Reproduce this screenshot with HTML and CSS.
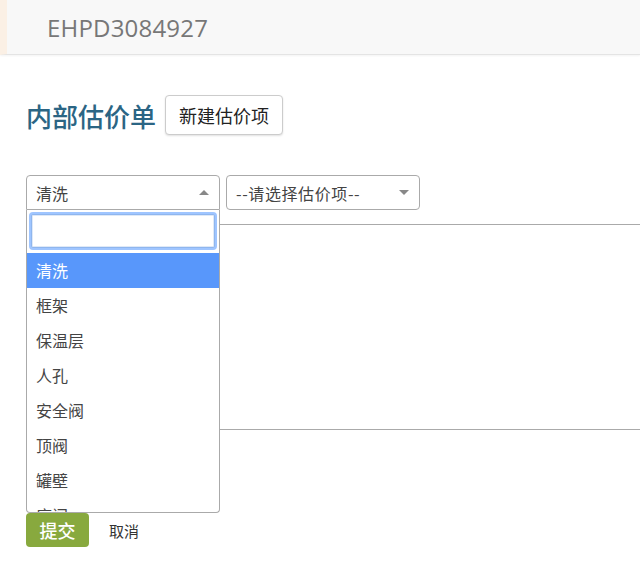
FILE: index.html
```html
<!DOCTYPE html>
<html lang="zh">
<head>
<meta charset="utf-8">
<title>内部估价单</title>
<link rel="stylesheet" href="styles.css">
</head>
<body>
<header class="topbar"><span class="code">EHPD3084927</span></header>
<main class="main">
  <div class="heading-row">
    <h1 class="heading">内部估价单</h1>
    <button class="btn-new">新建估价项</button>
  </div>
  <div class="select-row">
    <div class="select open">
      <span>清洗</span>
      <span class="arrow up"></span>
    </div>
    <div class="select">
      <span class="placeholder">--请选择估价项--</span>
      <span class="arrow down"></span>
    </div>
    <div class="dropdown">
      <div class="search"><input class="search-input" type="text"></div>
      <ul class="options">
        <li class="option selected">清洗</li>
        <li class="option">框架</li>
        <li class="option">保温层</li>
        <li class="option">人孔</li>
        <li class="option">安全阀</li>
        <li class="option">顶阀</li>
        <li class="option">罐壁</li>
        <li class="option">底阀</li>
      </ul>
    </div>
  </div>
  <div class="panel"></div>
  <div class="actions">
    <button class="btn-submit">提交</button>
    <span class="cancel">取消</span>
  </div>
</main>
</body>
</html>
```

FILE: styles.css
```css
html, body {
  margin: 0;
  padding: 0;
  background: #fff;
  font-family: "Open Sans", "Noto Sans CJK SC", sans-serif;
}

.topbar {
  box-sizing: border-box;
  height: 55px;
  background: #f8f8f8;
  border-left: 7px solid #fbf0e5;
  border-bottom: 1px solid #e4e4e4;
  box-shadow: 0 1px 2px rgba(0, 0, 0, 0.05);
  display: flex;
  align-items: center;
  padding-left: 40px;
}

.code {
  font-size: 24px;
  color: #777;
  letter-spacing: 0.2px;
}

.main {
  padding-left: 26px;
}

.heading-row {
  display: flex;
  align-items: center;
  gap: 9px;
  margin-top: 40px;
  height: 40px;
}

.heading {
  margin: 0;
  font-family: "Noto Sans CJK SC", sans-serif;
  font-size: 26px;
  font-weight: 500;
  color: #2b6584;
}

.btn-new {
  box-sizing: border-box;
  height: 40px;
  padding: 0 13px;
  font-family: "Noto Sans CJK SC", sans-serif;
  font-size: 18px;
  color: #222;
  background: #fff;
  border: 1px solid #ccc;
  border-radius: 4px;
  box-shadow: 0 1px 2px rgba(0, 0, 0, 0.12);
}

.select-row {
  position: relative;
  display: flex;
  gap: 6px;
  margin-top: 40px;
}

.select {
  box-sizing: border-box;
  width: 194px;
  height: 35px;
  border: 1px solid #aaa;
  border-radius: 4px;
  padding: 0 8px 0 9px;
  display: flex;
  align-items: center;
  justify-content: space-between;
  font-family: "Noto Sans CJK SC", sans-serif;
  font-size: 16px;
  color: #444;
}

.placeholder {
  letter-spacing: 0.6px;
}

.select.open {
  border-radius: 4px 4px 0 0;
}

.arrow {
  width: 0;
  height: 0;
  border-left: 5px solid transparent;
  border-right: 5px solid transparent;
  margin-right: 2px;
}

.arrow.up {
  border-bottom: 5px solid #888;
}

.arrow.down {
  border-top: 5px solid #888;
}

.dropdown {
  position: absolute;
  top: 35px;
  left: 0;
  z-index: 10;
  box-sizing: border-box;
  width: 194px;
  height: 303px;
  background: #fff;
  border: 1px solid #aaa;
  border-top: none;
  border-radius: 0 0 4px 4px;
  overflow: hidden;
}

.search {
  padding: 4px 4px 5px;
}

.search-input {
  display: block;
  box-sizing: border-box;
  width: 100%;
  height: 34px;
  margin: 0;
  border: 1px solid #8fb6ee;
  box-shadow: 0 0 0 2px #9fc5ff, inset 0 0 0 1px #dfe9f7;
  outline: none;
  border-radius: 2px;
}

.options {
  list-style: none;
  margin: 0;
  padding: 0;
}

.option {
  height: 35px;
  line-height: 35px;
  padding-left: 9px;
  font-family: "Noto Sans CJK SC", sans-serif;
  font-size: 16px;
  color: #444;
}

.option.selected {
  background: #5897fb;
  color: #fff;
}

.panel {
  margin-top: 14px;
  height: 204px;
  border-top: 1px solid #aaa;
  border-bottom: 1px solid #aaa;
}

.actions {
  display: flex;
  align-items: center;
  gap: 20px;
  margin-top: 83px;
}

.btn-submit {
  box-sizing: border-box;
  width: 63px;
  height: 34px;
  padding: 0;
  border: none;
  border-radius: 4px;
  background: #88a93e;
  color: #fff;
  font-family: "Noto Sans CJK SC", sans-serif;
  font-size: 18px;
  font-weight: 500;
}

.cancel {
  font-family: "Noto Sans CJK SC", sans-serif;
  font-size: 15px;
  color: #333;
}
```
